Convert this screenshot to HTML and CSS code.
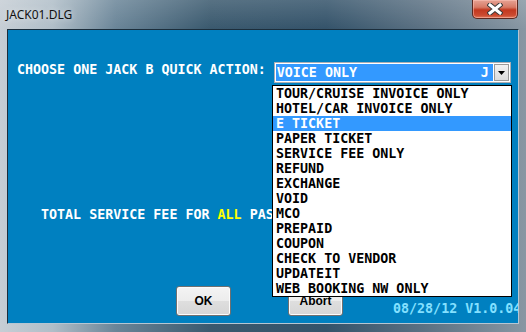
FILE: index.html
```html
<!DOCTYPE html>
<html lang="en">
<head>
  <meta charset="UTF-8" />
  <title>JACK01.DLG</title>
  <link rel="stylesheet" href="styles.css">
</head>
<body>
  <div class="window">
    <div class="titlebar">
      <span class="title">JACK01.DLG</span>
      <div class="close-btn">
        <svg width="16" height="12" viewBox="0 0 16 12">
          <path d="M3 2 L13 10 M13 2 L3 10" stroke="#3a3a3a" stroke-width="5" stroke-linecap="square"/>
          <path d="M3 2 L13 10 M13 2 L3 10" stroke="#ffffff" stroke-width="3" stroke-linecap="square"/>
        </svg>
      </div>
    </div>

    <div class="client">
      <div class="prompt-row">
        <span class="dos">CHOOSE ONE JACK B QUICK ACTION:</span>
        <div class="combo">
          <div class="combo-value dos"><span>VOICE ONLY</span><span>J</span></div>
          <div class="combo-btn">
            <svg width="7" height="4" viewBox="0 0 7 4"><path d="M0 0 H7 L3.5 4 Z" fill="#000"/></svg>
          </div>
        </div>
      </div>

      <div class="fee-line dos">TOTAL SERVICE FEE FOR <span class="yellow">ALL</span> PASSENGERS:</div>

      <div class="bottom-row">
        <button class="btn">OK</button>
        <button class="btn btn-abort">Abort</button>
        <span class="version dos">08/28/12 V1.0.04</span>
      </div>

      <ul class="dropdown dos">
        <li>TOUR/CRUISE INVOICE ONLY</li>
        <li>HOTEL/CAR INVOICE ONLY</li>
        <li class="selected">E TICKET</li>
        <li>PAPER TICKET</li>
        <li>SERVICE FEE ONLY</li>
        <li>REFUND</li>
        <li>EXCHANGE</li>
        <li>VOID</li>
        <li>MCO</li>
        <li>PREPAID</li>
        <li>COUPON</li>
        <li>CHECK TO VENDOR</li>
        <li>UPDATEIT</li>
        <li>WEB BOOKING NW ONLY</li>
      </ul>
    </div>
  </div>
</body>
</html>
```

FILE: styles.css
```css
body {
  margin: 0;
  padding: 0;
  background: #2e4b60;
}

.window {
  width: 526px;
  height: 332px;
  overflow: hidden;
  background: linear-gradient(to right, #c6ced5 0%, #b0bec8 10%, #6a8598 22%, #3a596e 40%, #34536a 62%, #5a7082 80%, #8897a3 100%);
}

.titlebar {
  height: 29px;
  display: flex;
  justify-content: space-between;
  align-items: flex-start;
  padding: 0 8px 0 6px;
  background: linear-gradient(to bottom, rgba(255, 255, 255, 0.15), rgba(255, 255, 255, 0));
}

.title {
  font-family: "Noto Sans", sans-serif;
  font-size: 12px;
  line-height: 30px;
  color: #111;
  text-shadow: 0 0 6px rgba(255, 255, 255, 0.7);
}

.close-btn {
  width: 44px;
  height: 18px;
  display: flex;
  justify-content: center;
  align-items: center;
  border: 1px solid #5a2820;
  border-top: none;
  border-radius: 0 0 5px 5px;
  background: linear-gradient(to bottom, #e6a394 0%, #d77a66 40%, #c2381f 55%, #cc4a30 85%, #e07a5a 100%);
  box-shadow: inset 0 0 0 1px rgba(255, 200, 190, 0.5);
}

.client {
  position: relative;
  height: 293px;
  margin: 0 7px;
  border: 1px solid;
  border-color: #1c2e3c #b6c6d2 #b6c6d2 #1c2e3c;
  background: #0080c0;
  overflow: hidden;
  display: flex;
  flex-direction: column;
}

.dos {
  font-family: "DejaVu Sans Mono", monospace;
  font-weight: bold;
  font-size: 13.33px;
  line-height: 15px;
  white-space: nowrap;
}

.prompt-row {
  display: flex;
  align-items: flex-start;
  gap: 8px;
  padding: 32px 0 0 9px;
  color: #fff;
}

.combo {
  width: 233px;
  height: 17px;
  display: flex;
  gap: 1px;
  padding: 1px;
  border: 1px solid #abadb3;
  background: #fff;
}

.combo-value {
  flex: 1;
  display: flex;
  justify-content: space-between;
  padding: 0 4px 0 1px;
  background: #3399ff;
  color: #fff;
  line-height: 17px;
}

.combo-btn {
  width: 15px;
  height: 17px;
  box-sizing: border-box;
  display: flex;
  justify-content: center;
  align-items: center;
  border: 1px solid #9a9a9a;
  background: linear-gradient(to bottom, #f2f2f2, #dcdcdc);
}

.fee-line {
  margin-top: 124px;
  padding-left: 33px;
  color: #fff;
}

.yellow {
  color: #ffff00;
}

.bottom-row {
  display: flex;
  align-items: flex-end;
  margin-top: 64px;
  padding-left: 168px;
}

.btn {
  flex-shrink: 0;
  width: 55px;
  height: 30px;
  padding: 0;
  border: 1px solid #707070;
  border-radius: 3px;
  background: linear-gradient(to bottom, #f4f4f4 0%, #ececec 50%, #dedede 51%, #d6d6d6 100%);
  box-shadow: inset 0 0 0 1px #fbfbfb;
  font-family: "Liberation Sans", Arial, sans-serif;
  font-weight: bold;
  font-size: 12px;
  color: #000;
}

.btn-abort {
  margin-left: 57px;
}

.version {
  flex-shrink: 0;
  margin-left: 50px;
  color: #84e0ff;
}

.dropdown {
  position: absolute;
  left: 264px;
  top: 55px;
  width: 238px;
  margin: 0;
  padding: 0;
  list-style: none;
  border: 1px solid #000;
  background: #fff;
  color: #000;
}

.dropdown li {
  height: 15px;
  padding-left: 3px;
}

.dropdown li.selected {
  background: #3399ff;
  color: #fff;
}
```
